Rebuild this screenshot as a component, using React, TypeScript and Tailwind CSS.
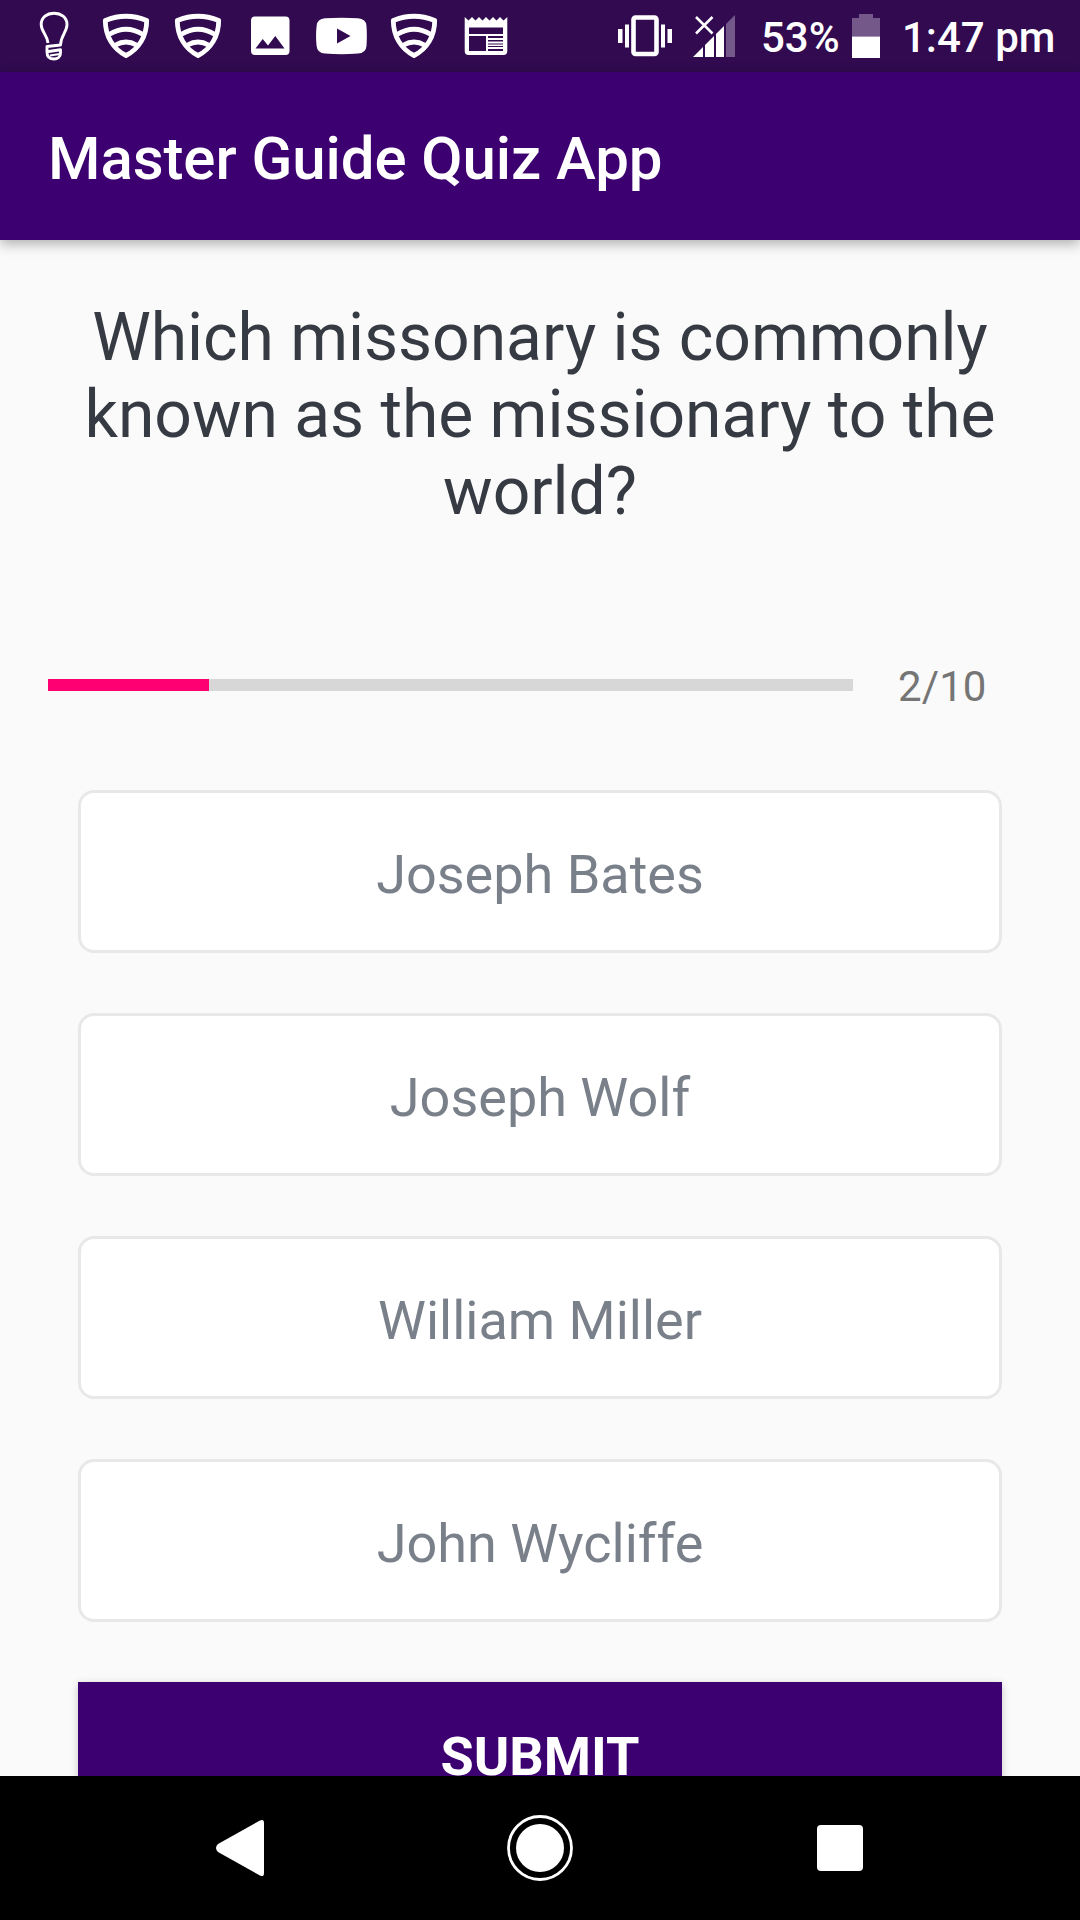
import React from "react";

const ANSWERS = ["Joseph Bates", "Joseph Wolf", "William Miller", "John Wycliffe"];

function Bulb() {
  return (
    <svg className="ml-[38px] h-[72px] w-8 shrink-0" viewBox="38 0 32 72" fill="none" stroke="#fff" strokeWidth="2.9" strokeLinejoin="round">
      <path d="M48 43C47 34 41.200 32 41.200 24.500C41.200 17.500 47 13.200 54 13.200C61 13.200 67 17.500 67 24.500C67 32 61 35 60.500 45L47 46.500V51.800L60.500 49.800V53C60.500 57 57.500 59 54 59C50 59 47 57 47 52" />
      <path d="M50 55.500L60 54" strokeWidth="2" />
    </svg>
  );
}

function Shield({ className }: { className: string }) {
  return (
    <svg className={className} viewBox="0 0 48 72" fill="none" stroke="#fff" strokeWidth="4.8">
      <path d="M3.300 20.500Q24 12 44.700 20.500C44.700 36 37 49 24 55.500C11 49 3.300 36 3.300 20.500Z" strokeLinejoin="round" />
      <path d="M7 34.500Q24 24 41 34.500M13.500 45Q24 39 34.500 45" />
    </svg>
  );
}

function Photo() {
  return (
    <svg className="ml-7 h-[72px] w-10 shrink-0" viewBox="250 0 40 72">
      <path fillRule="evenodd" fill="#fff" d="M255 16.500H285.500Q289.500 16.500 289.500 20.500V51Q289.500 55 285.500 55H255Q251 55 251 51V20.500Q251 16.500 255 16.500ZM255.500 48.500H284.500L275.300 36L268 45.500L262.700 39Z" />
    </svg>
  );
}

function YouTube() {
  return (
    <svg className="ml-[26px] h-[72px] w-[52px] shrink-0" viewBox="316 0 52 72">
      <path fillRule="evenodd" fill="#fff" d="M325 18.300Q341.500 17 358 18.300Q366 18.700 366.500 26Q367.200 36 366.500 46Q366 53 358 53.600Q341.500 55 325 53.600Q317.200 53 316.600 46Q315.500 36 316.600 26Q317.200 18.700 325 18.300ZM337 28.500V43.500L350.500 36Z" />
    </svg>
  );
}

function News() {
  return (
    <svg className="ml-[26px] h-[72px] w-11 shrink-0" viewBox="464 0 44 72">
      <path fill="#fff" d="M464.700 17L468.500 20.500L472 17L475.500 20.500L479 17L482.500 20.500L486 17L489.500 20.500L493 17L496.500 20.500L500 17L503.500 20.500L507.300 17V51Q507.300 55 503.500 55H468.500Q464.700 55 464.700 51V17Z" />
      <path fill="#310a50" d="M469 27.500H503V34H469ZM469 36H486V51H469ZM488 36H503V38H488ZM488 40H503V41.500H488ZM488 43.500H503V44.500H488ZM488 46H503V47H488ZM488 49H503V51H488Z" />
    </svg>
  );
}

function Vibrate() {
  return (
    <svg className="ml-auto h-[72px] w-[54px] shrink-0" viewBox="618 0 54 72">
      <rect x="633.500" y="17.500" width="23" height="36.500" rx="2" fill="none" stroke="#fff" strokeWidth="4.600" />
      <path fill="#fff" d="M618 29H622.500V43H618ZM625 24.500H629V47.500H625ZM661 24.500H665V47.500H661ZM667.500 29H672V43H667.500Z" />
    </svg>
  );
}

function Signal() {
  return (
    <svg className="ml-[21px] h-[72px] w-[42px] shrink-0" viewBox="693 0 42 72">
      <path fill="#fff" d="M693 57L703 47V57ZM705 45L714 36V57H705ZM716 34L724 26V57H716Z" />
      <path fill="#75588a" d="M726 24L735 15V57H726Z" />
      <path stroke="#fff" strokeWidth="2.500" d="M696 17L712.500 33.500M712.500 17L696 33.500" />
    </svg>
  );
}

function Battery() {
  return (
    <svg className="h-[72px] w-7 shrink-0" viewBox="852 0 28 72">
      <path fill="#75588a" d="M859 14H873V18H880V36.500H852V18H859Z" />
      <path fill="#fff" d="M852 36.500H880V58H852Z" />
    </svg>
  );
}

function StatusBar() {
  return (
    <div className="flex h-[72px] w-full shrink-0 items-center bg-[#310a50] text-[42px] leading-[50px] font-medium whitespace-nowrap text-white">
      <Bulb />
      <Shield className="ml-8 h-[72px] w-12 shrink-0" />
      <Shield className="ml-6 h-[72px] w-12 shrink-0" />
      <Photo />
      <YouTube />
      <Shield className="ml-[22px] h-[72px] w-12 shrink-0" />
      <News />
      <Vibrate />
      <Signal />
      <span className="ml-[26px] w-[91px] pt-[3px]">53%</span>
      <Battery />
      <span className="ml-[22px] w-[178px] pt-[3px]">1:47 pm</span>
    </div>
  );
}

function NavBar() {
  return (
    <nav className="flex h-36 w-full shrink-0 items-center bg-black pl-[216px]">
      <svg className="h-[58px] w-12" viewBox="0 0 48 58">
        <path fill="#fff" d="M2 25L44 1.500Q48 -.5 48 4V54Q48 58.500 44 56.500L2 33Q-2 29 2 25Z" />
      </svg>
      <svg className="ml-[243px] h-[66px] w-[66px]" viewBox="0 0 66 66">
        <circle cx="33" cy="33" r="31.500" fill="none" stroke="#fff" strokeWidth="2.800" />
        <circle cx="33" cy="33" r="24" fill="#fff" />
      </svg>
      <div className="ml-[244px] h-[46px] w-[46px] rounded-[4px] bg-white" />
    </nav>
  );
}

export default function App() {
  return (
    <div className="flex h-[1920px] w-[1080px] flex-col overflow-hidden bg-[#fafafa] font-['Roboto',sans-serif]">
      <StatusBar />
      <header className="flex h-[168px] shrink-0 items-center bg-[#3c0070] pt-[6px] pl-12 shadow-[0_4px_12px_rgba(0,0,0,0.3)]">
        <h1 className="text-[60px] leading-[70px] font-medium tracking-[-0.08px] whitespace-nowrap text-white">Master Guide Quiz App</h1>
      </header>
      <main className="flex min-h-0 flex-1 flex-col overflow-hidden pt-[59px]">
        <p className="h-[231px] shrink-0 text-center text-[66px] leading-[77px] tracking-[-0.04px] whitespace-nowrap text-[#363a43]">
          Which missonary is commonly
          <br />
          known as the missionary to the
          <br />
          world?
        </p>
        <div className="mt-[130px] flex h-[50px] shrink-0 items-center pl-12">
          <div className="h-3 w-[805px] bg-[#d7d7d7]">
            <div className="h-full w-1/5 bg-[#ff0072]" />
          </div>
          <span className="ml-[45px] pt-[3px] text-[42px] leading-[50px] tracking-[0.1px] text-[#757575]">2/10</span>
        </div>
        <div className="mt-20 flex shrink-0 flex-col gap-[60px] px-[78px]">
          {ANSWERS.map((answer) => (
            <button
              key={answer}
              className="flex h-[163px] items-center justify-center rounded-[16px] border-[3px] border-[#e8e8e8] bg-white pt-[6px] text-[54px] leading-[64px] text-[#7a808a]"
            >
              {answer}
            </button>
          ))}
          <button className="flex h-[144px] items-start justify-center bg-[#3c0070] pt-[43px] text-[54px] leading-[64px] font-bold text-white shadow-[0_2px_8px_rgba(0,0,0,0.2)]">
            SUBMIT
          </button>
        </div>
      </main>
      <NavBar />
    </div>
  );
}
